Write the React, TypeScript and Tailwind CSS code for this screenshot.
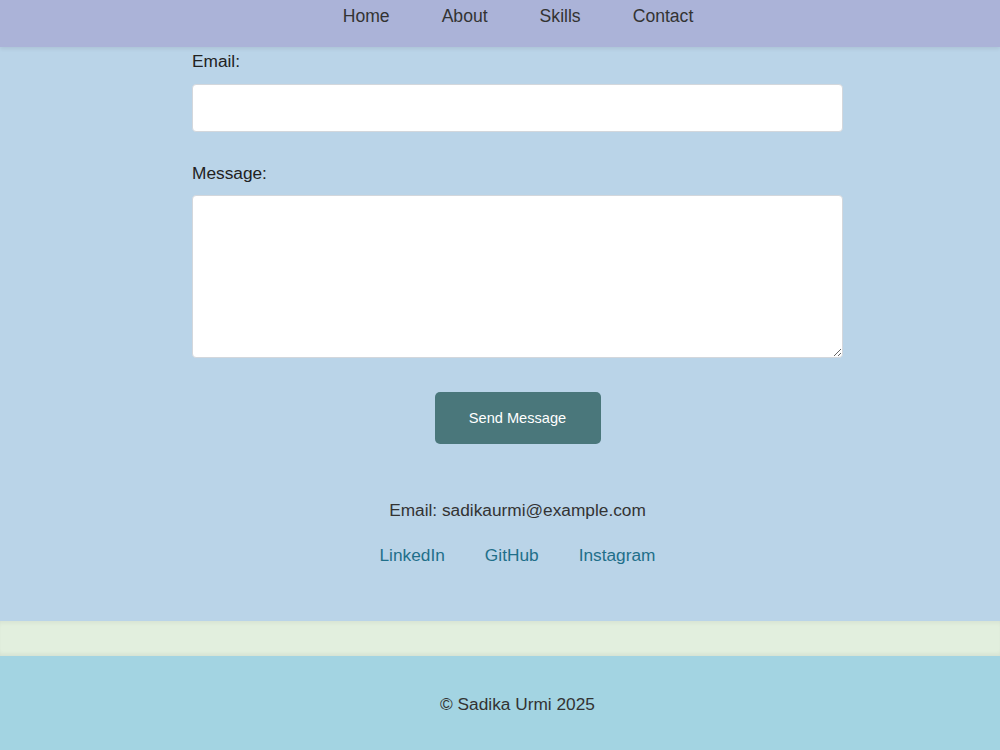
import React from "react";

export default function App() {
  const font = { fontFamily: '"Liberation Sans", Arial, sans-serif' };
  return (
    <div className="w-[1000px] h-[750px] overflow-hidden bg-[#bad4e8]" style={font}>
      <header className="relative z-10 h-[47px] bg-[#abb3d8] shadow-[0_2px_4px_rgba(0,0,0,0.08)]">
        <nav className="flex h-[33px] items-center justify-center gap-[52px] pl-[36px] text-[17.6px] text-[#333333]">
          <a>Home</a>
          <a>About</a>
          <a>Skills</a>
          <a>Contact</a>
        </nav>
      </header>

      <section className="h-[574px] pt-[4px]">
        <div className="mx-auto w-[686px] pl-[35px]">
          <label className="block text-[17.3px] leading-[21px] text-[#222222]">Email:</label>
          <input className="mt-[12px] block h-[48px] w-full rounded-[4px] border border-[#d3d7dc] bg-white" />
          <label className="mt-[31px] block text-[17.3px] leading-[21px] text-[#222222]">Message:</label>
          <textarea className="mt-[11px] block h-[163px] w-full resize-y rounded-[4px] border border-[#d3d7dc] bg-white" />
          <div className="flex justify-center pt-[34px]">
            <button className="h-[52px] w-[166px] rounded-[5px] bg-[#4a777b] pt-[1px] text-[14.6px] text-white">
              Send Message
            </button>
          </div>
          <p className="mt-[56px] text-center text-[17.3px] leading-[21px] text-[#333333]">
            Email: sadikaurmi@example.com
          </p>
          <div className="mt-[24px] flex justify-center gap-[40px] text-[17.3px] leading-[21px] text-[#1f6f8a]">
            <a>LinkedIn</a>
            <a>GitHub</a>
            <a>Instagram</a>
          </div>
        </div>
      </section>

      <div className="h-[35px] bg-[#e2efde] shadow-[inset_0_4px_4px_-2px_rgba(0,0,0,0.05),inset_0_-4px_4px_-2px_rgba(0,0,0,0.06)]" />

      <footer className="flex h-[94px] items-center justify-center pl-[35px] pt-[4px] bg-[#a3d4e2] text-[17.3px] text-[#333333]">
        © Sadika Urmi 2025
      </footer>
    </div>
  );
}
